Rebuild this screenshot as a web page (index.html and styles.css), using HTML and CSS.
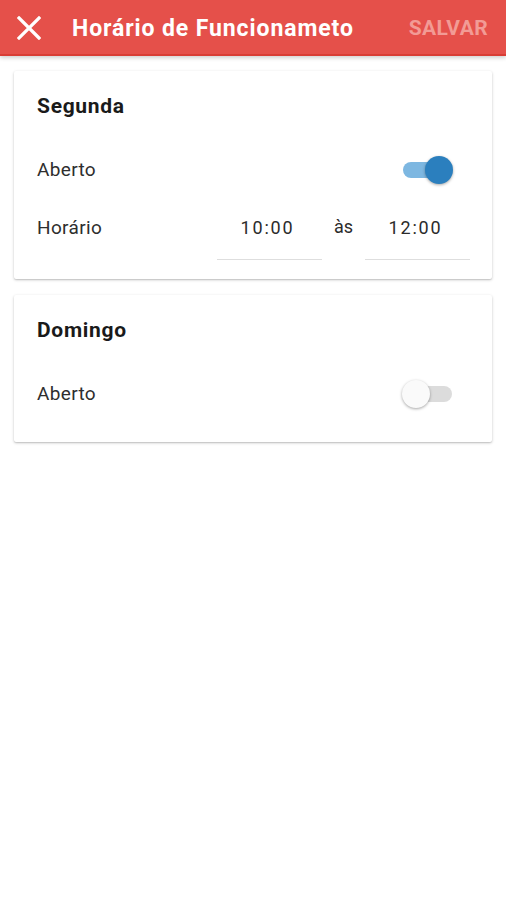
FILE: index.html
```html
<!DOCTYPE html>
<html lang="pt">
<head>
<meta charset="utf-8">
<title>Horário de Funcionameto</title>
<link rel="stylesheet" href="styles.css">
</head>
<body>
<header class="appbar">
  <button class="close" aria-label="Fechar">
    <svg width="24" height="24" viewBox="0 0 24 24"><path d="M2 2 L22 22 M22 2 L2 22" stroke="#fff" stroke-width="3.2" stroke-linecap="square" fill="none"/></svg>
  </button>
  <h1 class="title">Horário de Funcionameto</h1>
  <span class="save">SALVAR</span>
</header>
<main class="content">
  <section class="card">
    <h2 class="day">Segunda</h2>
    <div class="row">
      <span class="label">Aberto</span>
      <span class="switch on"><span class="track"></span><span class="thumb"></span></span>
    </div>
    <div class="row hours">
      <span class="label">Horário</span>
      <div class="times">
        <span class="field">10:00</span>
        <span class="sep">às</span>
        <span class="field">12:00</span>
      </div>
    </div>
  </section>
  <section class="card last">
    <h2 class="day">Domingo</h2>
    <div class="row">
      <span class="label">Aberto</span>
      <span class="switch"><span class="track"></span><span class="thumb"></span></span>
    </div>
  </section>
</main>
</body>
</html>
```
FILE: styles.css
```css
* { box-sizing: border-box; }
body {
  margin: 0;
  font-family: Roboto, "Liberation Sans", sans-serif;
  background: #fff;
  color: #222;
}
.appbar {
  height: 56px;
  background: #e5504a;
  border-bottom: 2px solid #d93d35;
  box-shadow: 0 2px 4px rgba(0,0,0,0.18);
  display: flex;
  align-items: center;
  padding: 2px 18px 0 16px;
}
.close {
  width: 26px;
  height: 26px;
  padding: 0;
  margin: 0;
  border: 0;
  background: none;
  display: flex;
  align-items: center;
  justify-content: center;
}
.title {
  margin: 0 0 0 30px;
  font-size: 23px;
  font-weight: 700;
  color: #fff;
  letter-spacing: 0.9px;
}
.save {
  margin-left: auto;
  font-size: 21px;
  font-weight: 700;
  color: #f29b95;
  letter-spacing: 0.4px;
}
.content {
  padding: 15px 14px;
}
.card {
  background: #fff;
  border-radius: 2px;
  box-shadow: 0 1px 3px rgba(0,0,0,0.22), 0 1px 1px rgba(0,0,0,0.08);
  padding: 23px 22px 19px 23px;
  margin-bottom: 16px;
}
.card.last { padding-bottom: 28px; }
.day {
  margin: 0;
  font-size: 21px;
  line-height: 24px;
  font-weight: 700;
  color: #1a1a1a;
  letter-spacing: 0.7px;
}
.row {
  display: flex;
  align-items: center;
  height: 40px;
  margin-top: 32px;
}
.label {
  font-size: 19px;
  line-height: 24px;
  color: #2e2e2e;
  letter-spacing: 0.35px;
}
.switch {
  position: relative;
  margin-left: auto;
  margin-right: 17px;
  width: 51px;
  height: 28px;
}
.track {
  position: absolute;
  left: 1px;
  right: 1px;
  top: 6px;
  height: 16px;
  border-radius: 8px;
  background: #dcdcdc;
}
.thumb {
  position: absolute;
  top: 0;
  left: 0;
  width: 28px;
  height: 28px;
  border-radius: 50%;
  background: #fafafa;
  box-shadow: 0 1px 3px rgba(0,0,0,0.35);
}
.switch.on .track { background: #7db7e1; }
.switch.on .thumb {
  left: auto;
  right: 0;
  background: #2b7fbe;
}
.row.hours {
  height: auto;
  margin-top: 13px;
  align-items: flex-start;
}
.row.hours .label { padding-top: 13px; }
.times {
  margin-left: auto;
  display: flex;
  align-items: flex-start;
}
.field {
  width: 105px;
  padding: 13px 4px 19px 0;
  line-height: 24px;
  font-size: 18px;
  text-align: center;
  letter-spacing: 1.8px;
  color: #2b2b2b;
  border-bottom: 1px solid #dedede;
}
.sep {
  width: 43px;
  padding-top: 12px;
  line-height: 24px;
  font-size: 18px;
  text-align: center;
  color: #2b2b2b;
}
```
